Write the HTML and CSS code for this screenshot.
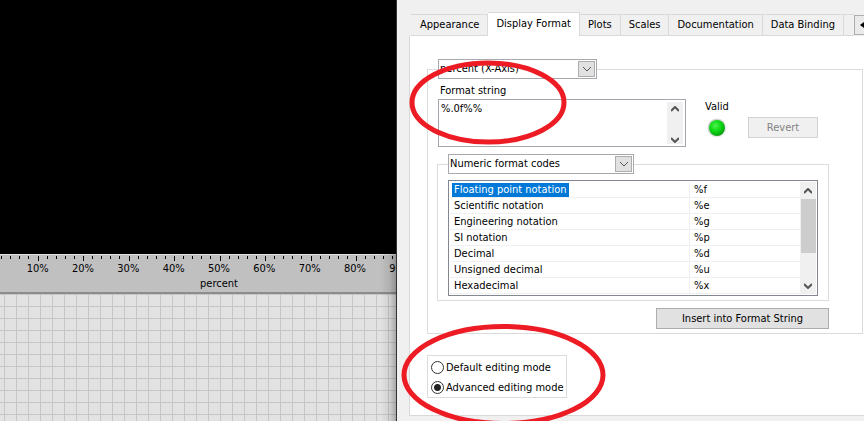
FILE: index.html
```html
<!DOCTYPE html>
<html lang="en">
<head>
<meta charset="utf-8">
<title>Graph Properties</title>
<link rel="stylesheet" href="styles.css">
</head>
<body>
<main class="workspace">
  <section class="graph">
    <div class="plot"></div>
    <div class="axis">
      <svg class="ticks" width="397" height="5" shape-rendering="crispEdges" aria-hidden="true">
        <path d="M1 0h1v3h-1zM10 0h1v3h-1zM19 0h1v3h-1zM28 0h1v3h-1zM47 0h1v3h-1zM56 0h1v3h-1zM65 0h1v3h-1zM74 0h1v3h-1zM92 0h1v3h-1zM101 0h1v3h-1zM110 0h1v3h-1zM119 0h1v3h-1zM138 0h1v3h-1zM147 0h1v3h-1zM156 0h1v3h-1zM165 0h1v3h-1zM183 0h1v3h-1zM192 0h1v3h-1zM201 0h1v3h-1zM210 0h1v3h-1zM229 0h1v3h-1zM238 0h1v3h-1zM247 0h1v3h-1zM256 0h1v3h-1zM274 0h1v3h-1zM283 0h1v3h-1zM292 0h1v3h-1zM301 0h1v3h-1zM320 0h1v3h-1zM329 0h1v3h-1zM338 0h1v3h-1zM347 0h1v3h-1zM365 0h1v3h-1zM374 0h1v3h-1zM383 0h1v3h-1zM392 0h1v3h-1z"/>
        <path d="M38 0h1v5h-1zM83 0h1v5h-1zM129 0h1v5h-1zM174 0h1v5h-1zM220 0h1v5h-1zM265 0h1v5h-1zM311 0h1v5h-1zM356 0h1v5h-1z"/>
      </svg>
      <div class="scale">
        <span>10%</span><span>20%</span><span>30%</span><span>40%</span><span>50%</span><span>60%</span><span>70%</span><span>80%</span><span>90%</span>
        <span class="axis-name">percent</span>
      </div>
    </div>
    <div class="canvas-grid"></div>
  </section>

  <section class="dialog">
    <nav class="tabs">
      <button class="tab">Appearance</button>
      <button class="tab active">Display Format</button>
      <button class="tab">Plots</button>
      <button class="tab">Scales</button>
      <button class="tab">Documentation</button>
      <button class="tab">Data Binding</button>
      <span class="tab-rest"></span>
      <button class="tab-scroll" aria-label="Previous tabs"><svg width="4" height="6"><path d="M4 0v6L0 3z"/></svg></button>
    </nav>

    <div class="page">
      <fieldset class="group">
        <legend>
          <span class="combo axis-combo">
            <select aria-label="Axis"><option>percent (X-Axis)</option></select>
            <span class="drop"><svg width="10" height="6"><path d="M1 1l4 4 4-4"/></svg></span>
          </span>
        </legend>
        <label class="caption" for="fmt">Format string</label>
        <div class="format-row">
          <div class="text-frame">
            <textarea id="fmt">%.0f%%</textarea>
            <div class="scrollbar">
              <svg class="arrow" width="8" height="6"><path d="M0 5l4-4 4 4"/></svg>
              <svg class="arrow" width="8" height="6"><path d="M0 1l4 4 4-4"/></svg>
            </div>
          </div>
          <div class="valid">
            <span>Valid</span>
            <svg width="20" height="20" viewBox="0 0 20 20">
              <defs>
                <radialGradient id="led" cx=".4" cy=".35" r=".65"><stop offset="0" stop-color="#4ff04f"/><stop offset=".5" stop-color="#10dc18"/><stop offset="1" stop-color="#08a010"/></radialGradient>
                <linearGradient id="rim" x1="0" y1="0" x2="1" y2="1"><stop offset="0" stop-color="#c8c8c8"/><stop offset="1" stop-color="#f6f6f6"/></linearGradient>
              </defs>
              <circle cx="10" cy="10" r="9.5" fill="url(#rim)"/>
              <circle cx="10" cy="10" r="8" fill="url(#led)"/>
            </svg>
          </div>
          <button class="btn revert" disabled>Revert</button>
        </div>

        <div class="codes">
          <fieldset class="group inner">
            <legend>
              <span class="combo codes-combo">
                <select aria-label="Code category"><option>Numeric format codes</option></select>
                <span class="drop"><svg width="10" height="6"><path d="M1 1l4 4 4-4"/></svg></span>
              </span>
            </legend>
            <div class="list">
              <table>
                <tbody>
                  <tr><td><mark>Floating point notation</mark></td><td>%f</td></tr>
                  <tr><td>Scientific notation</td><td>%e</td></tr>
                  <tr><td>Engineering notation</td><td>%g</td></tr>
                  <tr><td>SI notation</td><td>%p</td></tr>
                  <tr><td>Decimal</td><td>%d</td></tr>
                  <tr><td>Unsigned decimal</td><td>%u</td></tr>
                  <tr><td>Hexadecimal</td><td>%x</td></tr>
                </tbody>
              </table>
              <div class="scrollbar list-scroll">
                <svg class="arrow" width="8" height="6"><path d="M0 5l4-4 4 4"/></svg>
                <span class="thumb"></span>
                <svg class="arrow" width="8" height="6"><path d="M0 1l4 4 4-4"/></svg>
              </div>
            </div>
          </fieldset>
          <button class="btn insert">Insert into Format String</button>
        </div>
      </fieldset>

      <div class="modes" role="radiogroup" aria-label="Editing mode">
        <label><input type="radio" name="mode">Default editing mode</label>
        <label><input type="radio" name="mode" checked>Advanced editing mode</label>
      </div>
    </div>
  </section>

  <svg class="marks" width="620" height="421" aria-hidden="true">
    <ellipse cx="488" cy="102.5" rx="76" ry="39.5"/>
    <ellipse cx="503.5" cy="375" rx="99.5" ry="48.5"/>
  </svg>
</main>
</body>
</html>
```
FILE: styles.css
```css
* { box-sizing: border-box; }

body {
  margin: 0;
  font: 11px/14px "DejaVu Sans Condensed", "Noto Sans", sans-serif;
  color: #000;
}

button, select, textarea { font: inherit; color: inherit; }

svg { display: block; }

.workspace {
  position: relative;
  display: grid;
  grid-template-columns: 397px 1fr;
  height: 100vh;
  overflow: hidden;
}

/* Graph side */
.graph {
  position: relative;
  display: flex;
  flex-direction: column;
  overflow: hidden;
  border-right: 1px solid #333;
}

.graph::after {
  content: "";
  position: absolute;
  inset: 0 0 0 auto;
  width: 16px;
  background: linear-gradient(to right, rgba(0, 0, 0, 0), rgba(0, 0, 0, 0.08) 60%, rgba(0, 0, 0, 0.25));
}

.plot { flex: 0 0 254px; background: #000; }

.axis {
  flex: none;
  padding-top: 1px;
  background: #c0c0c0;
  border-top: 1px solid #e0e0e0;
  border-bottom: 2px solid #8c8c8c;
}

.scale {
  display: grid;
  grid-template-columns: repeat(9, 1fr);
  width: 408px;
  margin-left: 15px;
  padding-bottom: 1px;
  line-height: 15px;
  text-align: center;
}

.axis-name { grid-column: 1 / -1; }

.canvas-grid {
  flex: 1;
  background:
    linear-gradient(#c6c6c6 1px, transparent 1px) 0 0 / 12px 12px,
    linear-gradient(to right, #c6c6c6 1px, transparent 1px) 4px 0 / 12px 12px,
    #e2e2e2;
}

/* Properties dialog */
.dialog {
  padding: 12px 0 5px 12px;
  background: #f0f0f0;
  min-width: 0;
  overflow: hidden;
}

.tabs {
  position: relative;
  display: flex;
  align-items: flex-end;
  height: 24px;
  padding-left: 2px;
}

.tab {
  flex: none;
  height: 22px;
  padding: 0 8px;
  background: #f0f0f0;
  border: solid #d9d9d9;
  border-width: 1px 1px 1px 0;
  white-space: nowrap;
}

.tab.active {
  height: 24px;
  padding-bottom: 2px;
  background: #fff;
  border-width: 1px 1px 0 0;
}

.tab:has(+ .active) { padding: 0 8px 0 9px; }

.tab-rest {
  flex: 1;
  height: 22px;
  border: solid #d9d9d9;
  border-width: 1px 0;
}

.tab-scroll {
  display: flex;
  align-items: center;
  justify-content: flex-end;
  width: 10px;
  height: 20px;
  margin-bottom: 1px;
  padding: 0;
  background: #eaeaea;
  border: 1px solid #adadad;
  border-right: 0;
}

.page {
  padding: 23px 1px 17px 17px;
  background: #fff;
  border: solid #d9d9d9;
  border-width: 0 0 1px 1px;
}

.group {
  min-width: 0;
  margin: 0;
  padding: 0 10px 4px;
  border: 1px solid #dcdcdc;
}

legend { padding: 0; }

.combo {
  display: flex;
  height: 20px;
  padding: 1px;
  background: #fff;
  border: 1px solid #a8a9ae;
}

.axis-combo { width: 159px; }
.codes-combo { width: 186px; }

.combo select {
  flex: 1;
  min-width: 0;
  padding: 0;
  appearance: none;
  background: transparent;
  border: 0;
}

.drop {
  display: grid;
  place-items: center;
  width: 17px;
  background: #e1e1e1;
  border: 1px solid #adadad;
}

.drop path {
  fill: none;
  stroke: #555;
}

.caption { display: block; margin: 5px 2px 1px; }

.format-row {
  display: flex;
  gap: 19px;
}

.text-frame {
  display: flex;
  width: 248px;
  height: 48px;
  padding: 2px;
  border: 1px solid #a5a5ad;
}

.text-frame textarea {
  flex: 1;
  min-width: 0;
  padding: 0;
  border: 0;
  resize: none;
  overflow: hidden;
}

.scrollbar {
  display: flex;
  flex-direction: column;
  justify-content: space-between;
  align-items: center;
  width: 16px;
  padding: 4px 0 1px;
  background: #f0f0f0;
}

.arrow path {
  fill: none;
  stroke: #555;
  stroke-width: 2;
}

.valid {
  display: flex;
  flex-direction: column;
  align-items: center;
  gap: 4px;
  width: 24px;
  padding-top: 1px;
}

.btn {
  height: 21px;
  padding: 0;
  background: #e1e1e1;
  border: 1px solid #adadad;
}

.revert {
  width: 70px;
  margin-top: 18px;
  background: #f0f0f0;
  border-color: #d2d2d2;
  color: #838383;
}

.codes {
  display: flex;
  flex-direction: column;
  gap: 7px;
  width: 392px;
  margin: 7px 0 0 -1px;
}

.insert { width: 173px; align-self: flex-end; }

.list {
  display: flex;
  margin-top: 6px;
  padding: 1px;
  border: 1px solid #828790;
}

.list table {
  flex: 1;
  table-layout: fixed;
  border-spacing: 0;
}

.list td {
  height: 16px;
  padding: 0 4px;
  border-bottom: 1px solid #f0f0f0;
}

.list td:first-child {
  width: 240px;
  border-right: 1px solid #f0f0f0;
}

.list mark {
  display: inline-block;
  margin-left: -2px;
  padding: 0 2px;
  background: #0078d7;
  color: #fff;
}

.list-scroll { padding: 6px 0 5px; justify-content: flex-start; }

.thumb {
  width: 15px;
  height: 54px;
  margin: 5px 0 auto;
  background: #cdcdcd;
}

.modes {
  display: flex;
  flex-direction: column;
  align-items: flex-start;
  width: 140px;
  margin-top: 21px;
  padding: 1px 0 0 3px;
  border: 1px solid #dcdcdc;
  white-space: nowrap;
}

.modes label {
  display: flex;
  align-items: center;
  gap: 2px;
  height: 20px;
  padding-top: 1px;
}

.modes input {
  appearance: none;
  width: 13px;
  height: 13px;
  margin: 0;
  border: 1px solid #333;
  border-radius: 50%;
  background: #fff;
}

.modes input:checked {
  background: radial-gradient(circle, #222 3px, #fff 4px);
}

/* Hand-drawn highlights over the dialog */
.marks {
  position: absolute;
  left: 0;
  top: 0;
  pointer-events: none;
}

.marks ellipse {
  fill: none;
  stroke: #ed1c24;
  stroke-width: 5;
}
```
